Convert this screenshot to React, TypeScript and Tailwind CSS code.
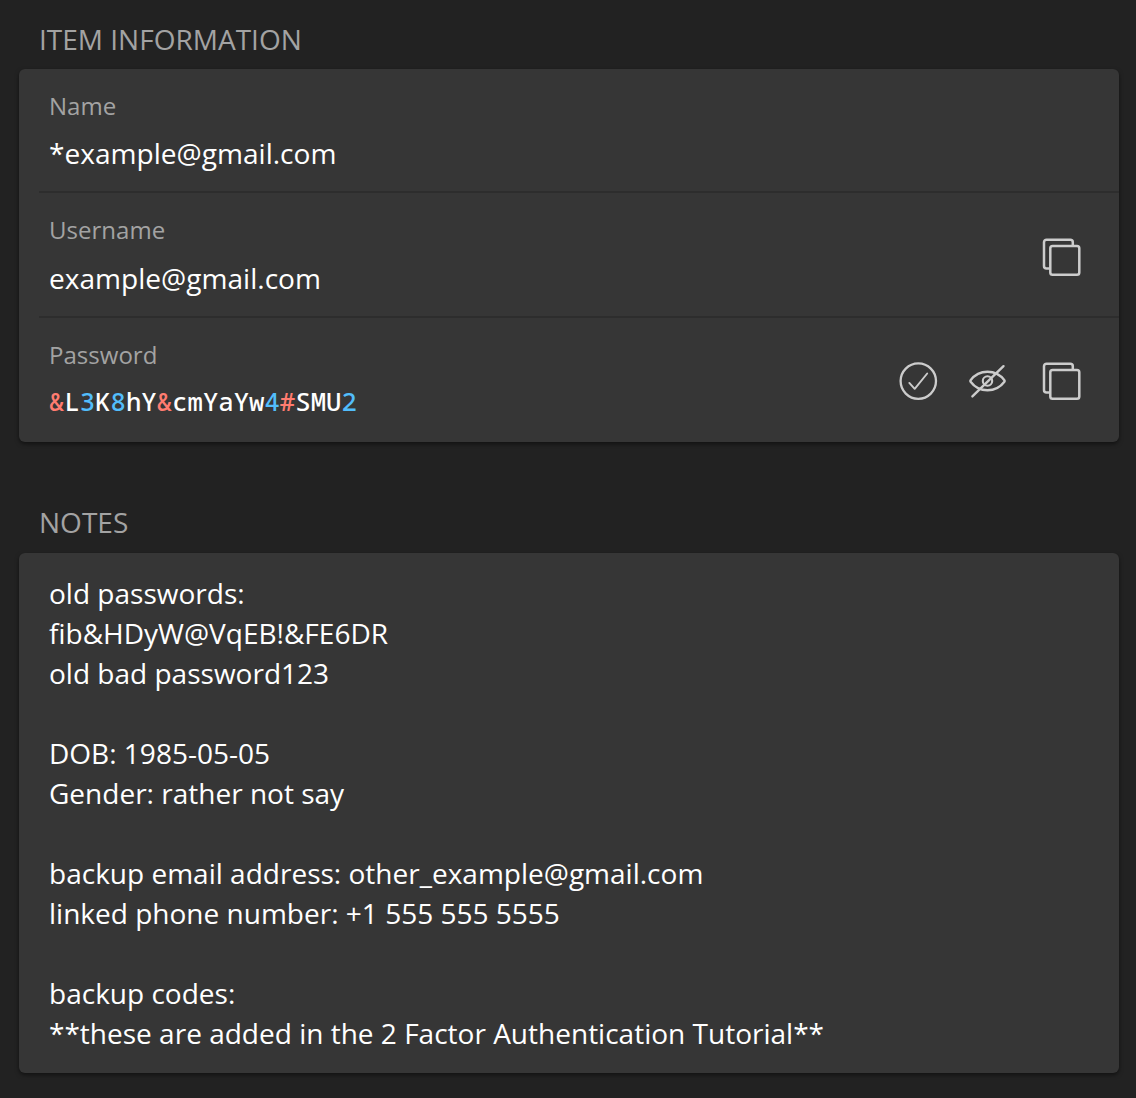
import React from "react";

function CopyIcon() {
  return (
    <svg width="40" height="40" viewBox="0 0 40 40" fill="none" stroke="#cccccc" strokeWidth="2.5">
      <path d="M8.200 30.400H4.500a2.500 2.500 0 0 1-2.500-2.500V4.200a2.500 2.500 0 0 1 2.500-2.500h23.800a2.500 2.500 0 0 1 2.500 2.500V8" />
      <rect x="8.300" y="8" width="29" height="28.800" rx="2.300" />
    </svg>
  );
}

function CheckIcon() {
  return (
    <svg width="40" height="40" viewBox="0 0 40 40" fill="none" stroke="#cccccc" strokeLinecap="round" strokeLinejoin="round">
      <circle cx="19.300" cy="19.100" r="17.700" strokeWidth="2.300" />
      <path d="M10.300 20.900L15.700 26.800L28.200 11.500" strokeWidth="1.900" />
    </svg>
  );
}

function EyeSlashIcon() {
  return (
    <svg width="40" height="40" viewBox="0 0 40 40" fill="none" stroke="#cccccc" strokeWidth="2.400" strokeLinecap="round" strokeLinejoin="round">
      <path d="M2.600 18.200C6.500 13 12.500 9.700 19.500 9.700S32.500 13 36.400 18.200Q37 19 36.400 19.800C32.500 25 26.500 28.300 19.500 28.300S6.500 25 2.600 19.800Q2 19 2.600 18.200Z" />
      <circle cx="19.500" cy="19" r="4.700" strokeWidth="2.100" />
      <path d="M4.400 34.400L35.500 4.200" />
    </svg>
  );
}

function Label({ children }: { children: React.ReactNode }) {
  return <div className="text-[24.050px] leading-[34px] text-[#a3a3a3]">{children}</div>;
}

const password = "&L3K8hY&cmYaYw4#SMU2";

function charColor(c: string) {
  if (/[0-9]/.test(c)) return "text-[#52bdfb]";
  if (/[a-zA-Z]/.test(c)) return "text-white";
  return "text-[#ff7c70]";
}

const notes = `old passwords:
fib&HDyW@VqEB!&FE6DR
old bad password123

DOB: 1985-05-05
Gender: rather not say

backup email address: other_example@gmail.com
linked phone number: +1 555 555 5555

backup codes:
**these are added in the 2 Factor Authentication Tutorial**`;

export default function App() {
  return (
    <div className="h-[1098px] w-[1136px] overflow-hidden bg-[#222222] pl-[19px] pr-[17px] pt-[19px] font-['Open_Sans',sans-serif] text-[28.030px] text-white">
      <h2 className="h-[50px] pl-5 leading-10 text-[#a3a3a3]">ITEM INFORMATION</h2>
      <section className="h-[373px] rounded-[6px] bg-[#363636] pl-5 shadow-[0_2px_4px_rgba(0,0,0,0.5)]">
        <div className="h-[124px] border-b-2 border-[#2d2d2d] pl-[10px] pt-5">
          <Label>Name</Label>
          <div className="mt-[10px] text-[28.080px] leading-10">*example@gmail.com</div>
        </div>
        <div className="flex h-[125px] justify-between border-b-2 border-[#2d2d2d] pl-[10px] pr-[37px] pt-5">
          <div>
            <Label>Username</Label>
            <div className="mt-[11px] text-[28.080px] leading-10">example@gmail.com</div>
          </div>
          <div className="pt-[25px]"><CopyIcon /></div>
        </div>
        <div className="flex h-[124px] justify-between pl-[10px] pr-[37px] pt-5">
          <div>
            <Label>Password</Label>
            <div className="mt-[10px] font-['Noto_Sans_Mono','DejaVu_Sans_Mono',monospace] text-[25.650px] font-medium leading-10">
              {password.split("").map((c, i) => (
                <span key={i} className={charColor(c)}>{c}</span>
              ))}
            </div>
          </div>
          <div className="flex pt-[24px]">
            <div className="mr-[29px]"><CheckIcon /></div>
            <div className="mr-[34px]"><EyeSlashIcon /></div>
            <CopyIcon />
          </div>
        </div>
      </section>
      <h2 className="mt-[60px] h-[51px] pl-5 leading-10 text-[#a3a3a3]">NOTES</h2>
      <section className="h-[520px] whitespace-pre rounded-[6px] bg-[#363636] pl-[30px] pt-[20px] leading-10 shadow-[0_2px_4px_rgba(0,0,0,0.5)]">
        {notes}
      </section>
    </div>
  );
}
